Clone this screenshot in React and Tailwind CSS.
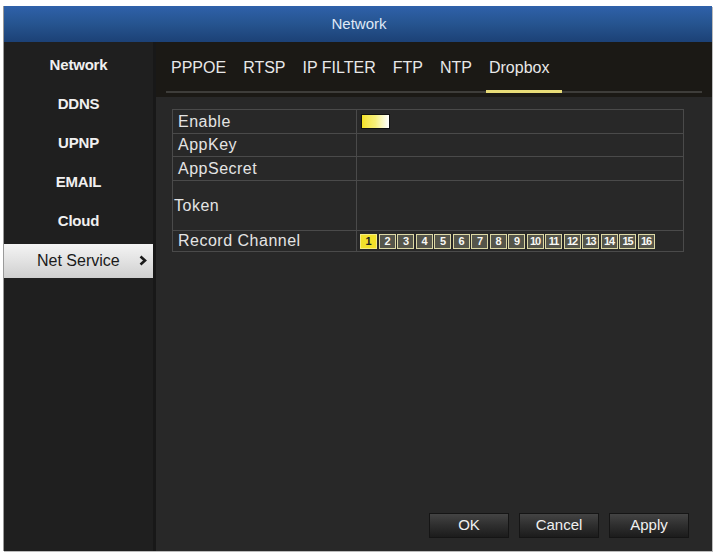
import React from 'react'

const side = ['Network', 'DDNS', 'UPNP', 'EMAIL', 'Cloud']
const tabs = ['PPPOE', 'RTSP', 'IP FILTER', 'FTP', 'NTP', 'Dropbox']
const rows = [
  { label: 'Enable', h: 'h-[23px]', toggle: true },
  { label: 'AppKey', h: 'h-[23px]' },
  { label: 'AppSecret', h: 'h-[24px]' },
  { label: 'Token', h: 'h-[50px]', tight: true },
  { label: 'Record Channel', h: 'h-[21px]', channels: true },
]

function Channels() {
  return (
    <div className="flex gap-[1.5px] pl-[3px]">
      {Array.from({ length: 16 }, (_, i) => (
        <div
          key={i}
          className={
            i === 0
              ? 'w-[17px] h-[15px] flex items-center justify-center bg-[#f2e12a] border border-[#f6ee80] text-[#222] text-[11px] font-bold leading-none'
              : 'w-[17px] h-[15px] flex items-center justify-center bg-[#55554a] border border-[#dcd8a4] text-[#f8f8f4] text-[11px] font-bold leading-none tracking-[-1px]'
          }
        >
          {i + 1}
        </div>
      ))}
    </div>
  )
}

export default function App() {
  return (
    <div className="w-[715px] h-[554px] bg-white pt-[6px] pl-[3px] font-['Liberation_Sans',Arial,sans-serif]">
      <div className="w-[709px] h-[545px] flex flex-col border-l border-[#9a9a9a] shadow-[1px_1px_0_#bbb]">
        <div className="h-[36px] flex items-center justify-center bg-gradient-to-b from-[#2f61aa] via-[#26548f] to-[#1c4176] text-[#dfe8f6] text-[15px] pl-[2px]">
          Network
        </div>
        <div className="flex flex-1 min-h-0">
          <div className="w-[152px] bg-[#1f1f1f] pt-[4px] border-r-[3px] border-[#181818]">
            {side.map(s => (
              <div key={s} className="h-[39px] flex items-center justify-center text-[#f0f0f0] text-[15px] font-bold tracking-[-0.2px]">
                {s}
              </div>
            ))}
            <div className="h-[39px] flex items-center">
              <div className="h-[34px] w-full flex items-center bg-gradient-to-b from-[#f4f4f4] via-[#e2e2e2] to-[#cfcfcf] text-[#1a1a1a] text-[16px] pl-[33px] pr-[6px]">
                <span className="flex-1">Net Service</span>
                <svg width="8" height="11" viewBox="0 0 8 11">
                  <path d="M1.5 1.5 L6 5.5 L1.5 9.5" fill="none" stroke="#1a1a1a" strokeWidth="2.6" />
                </svg>
              </div>
            </div>
          </div>
          <div className="flex-1 flex flex-col bg-[#282828]">
            <div className="h-[55px] bg-[#1b1915] px-[10px] pt-[16px]">
              <div className="flex gap-[17px] pl-[5px] text-[16px] text-[#e8e8e8] leading-[20px]">
                {tabs.map(t => (
                  <span key={t}>{t}</span>
                ))}
              </div>
              <div className="mt-[13px] h-[2px] bg-[#3e3d3a] flex">
                <div className="ml-[320px] w-[76px] h-[3px] -mt-[1px] bg-[#e8dc78]" />
              </div>
            </div>
            <div className="flex-1 pl-[16px] pr-[28px] pt-[12px]">
              <div className="border border-[#4a4a4a]">
                {rows.map((r, i) => (
                  <div key={r.label} className={`flex ${r.h} ${i ? 'border-t border-[#4a4a4a]' : ''}`}>
                    <div className={`w-[184px] flex items-center text-[16px] tracking-[0.5px] text-[#e4e4e4] border-r border-[#4a4a4a] ${r.tight ? 'pl-[1px]' : 'pl-[5px]'}`}>
                      {r.label}
                    </div>
                    <div className="flex-1 flex items-center">
                      {r.toggle && (
                        <div className="ml-[4px] w-[29px] h-[15px] border border-[#111] bg-gradient-to-r from-[#f4e21c] via-[#f7f07a] to-white" />
                      )}
                      {r.channels && <Channels />}
                    </div>
                  </div>
                ))}
              </div>
            </div>
            <div className="h-[38px] flex gap-[10px] pl-[273px] pb-[6px] items-start">
              {['OK', 'Cancel', 'Apply'].map(b => (
                <div key={b} className="w-[80px] h-[25px] flex items-center justify-center bg-gradient-to-b from-[#444] via-[#2e2e2e] to-[#1c1c1c] border border-[#151515] text-[#f0f0f0] text-[15px]">
                  {b}
                </div>
              ))}
            </div>
          </div>
        </div>
      </div>
    </div>
  )
}
